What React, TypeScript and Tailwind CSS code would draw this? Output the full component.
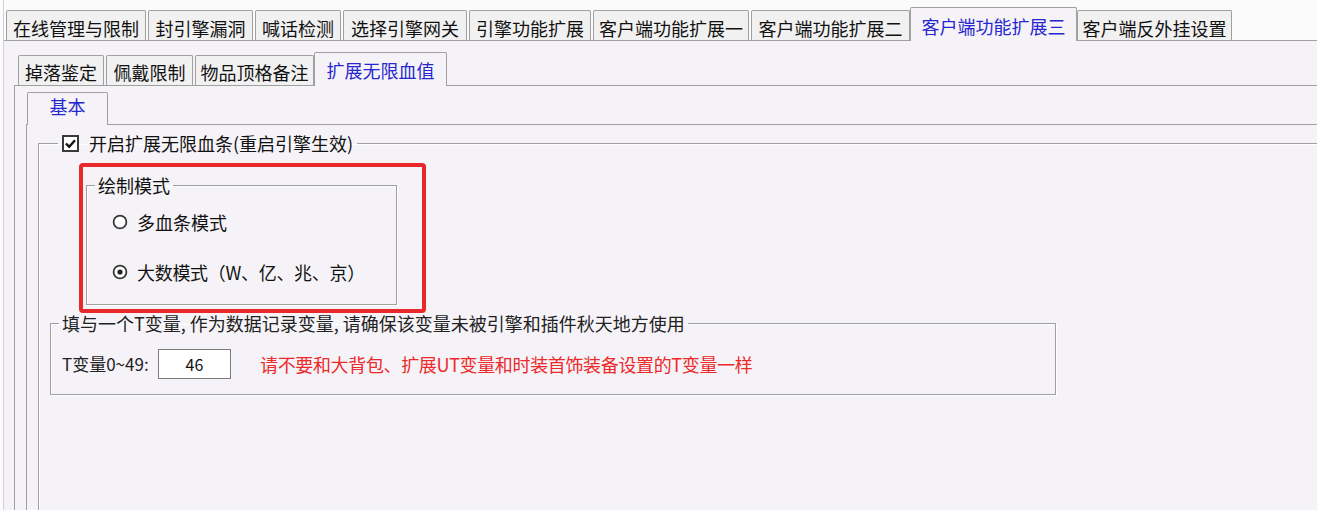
import React from "react";

type TabDef = { label: string; cls: string; active?: boolean };

const outerTabs: TabDef[] = [
  { label: "在线管理与限制", cls: "w-[140px]" },
  { label: "封引擎漏洞", cls: "w-[105px] ml-[2px]" },
  { label: "喊话检测", cls: "w-[86px] ml-[2px]" },
  { label: "选择引擎网关", cls: "w-[124px] ml-[2px]" },
  { label: "引擎功能扩展", cls: "w-[122px] ml-[2px]" },
  { label: "客户端功能扩展一", cls: "w-[156px] ml-[2px]" },
  { label: "客户端功能扩展二", cls: "w-[159px] ml-[2px]" },
  { label: "客户端功能扩展三", cls: "w-[167px]", active: true },
  { label: "客户端反外挂设置", cls: "w-[155px]" },
];

const innerTabs: TabDef[] = [
  { label: "掉落鉴定", cls: "w-[86px]" },
  { label: "佩戴限制", cls: "w-[87px] ml-[2px]" },
  { label: "物品顶格备注", cls: "w-[119px] ml-[2px]" },
  { label: "扩展无限血值", cls: "w-[133px]", active: true },
];

function OuterTab({ t }: { t: TabDef }) {
  if (t.active) {
    return (
      <div
        className={`${t.cls} shrink-0 h-[34px] -mb-px relative z-10 flex items-center justify-center pt-[3px] border border-b-0 border-[#a0a0a0] rounded-t-[2px] bg-[#f6f3f8] text-[#2727cf] text-[18px] leading-[18px]`}
      >
        {t.label}
      </div>
    );
  }
  return (
    <div
      className={`${t.cls} shrink-0 h-[30px] flex items-center justify-center pt-[5px] border border-b-0 border-[#a0a0a0] rounded-t-[2px] bg-[#f1f1f1] text-[#111] text-[18px] leading-[18px]`}
    >
      {t.label}
    </div>
  );
}

function InnerTab({ t }: { t: TabDef }) {
  if (t.active) {
    return (
      <div
        className={`${t.cls} shrink-0 h-[34px] -mb-px relative z-10 flex items-center justify-center pt-[1px] border border-b-0 border-[#a0a0a0] rounded-t-[2px] bg-[#f6f3f8] text-[#2727cf] text-[18px] leading-[18px]`}
      >
        {t.label}
      </div>
    );
  }
  return (
    <div
      className={`${t.cls} shrink-0 h-[30px] flex items-center justify-center pt-[3px] border border-b-0 border-[#a0a0a0] rounded-t-[2px] bg-[#f1f1f1] text-[#111] text-[18px] leading-[18px]`}
    >
      {t.label}
    </div>
  );
}

function CheckBox() {
  return (
    <svg width="17" height="17" viewBox="0 0 17 17" className="shrink-0">
      <rect x="1" y="1" width="15" height="15" fill="#ffffff" stroke="#3a3a3a" strokeWidth="2" />
      <path d="M4 8.5 L7.2 11.8 L13 5.2" fill="none" stroke="#111" strokeWidth="2.4" />
    </svg>
  );
}

function Radio({ checked }: { checked?: boolean }) {
  return (
    <svg width="16" height="16" viewBox="0 0 16 16" className="shrink-0">
      <circle cx="8" cy="8" r="6.4" fill="#ffffff" stroke="#3a3a3a" strokeWidth="1.8" />
      {checked && <circle cx="8" cy="8" r="2.6" fill="#222" />}
    </svg>
  );
}

export default function App() {
  return (
    <div className="relative w-[1317px] h-[510px] overflow-hidden bg-[#fcfcfc] font-['Noto_Sans_CJK_SC','Microsoft_YaHei',sans-serif] text-[#111]">
      <div className="ml-[3px] h-[510px] border-l border-[#d4d0d8] flex flex-col">
        {/* outer tab strip */}
        <div className="shrink-0 flex items-end h-[41px] pl-[2px] border-b border-[#a0a0a0] bg-[#fbfbfb]">
          {outerTabs.map((t) => (
            <OuterTab key={t.label} t={t} />
          ))}
        </div>

        {/* outer panel */}
        <div className="flex-1 min-h-0 bg-[#f6f3f8] pl-[10px] flex flex-col">
          <div className="shrink-0 flex items-end h-[45px] pl-[4px] border-b border-[#a0a0a0]">
            {innerTabs.map((t) => (
              <InnerTab key={t.label} t={t} />
            ))}
          </div>

          {/* second panel */}
          <div className="flex-1 min-h-0 border-l border-[#a0a0a0] pl-[11px] flex flex-col">
            <div className="shrink-0 flex items-end h-[39px] pl-[1px] border-b border-[#a0a0a0]">
              <div className="shrink-0 w-[81px] h-[33px] -mb-px relative z-10 flex items-center justify-center pb-[6px] border border-b-0 border-[#a0a0a0] rounded-t-[2px] bg-[#f6f3f8] text-[#2727cf] text-[18px] leading-[18px]">
                基本
              </div>
            </div>

            {/* third panel */}
            <div className="flex-1 min-h-0 border-l border-[#a0a0a0] pl-[11px]">
              <fieldset className="mt-[6px] min-h-[420px] border border-r-0 border-b-0 border-[#a0a0a0] shadow-[inset_1px_1px_0_#ffffff]">
                <legend className="ml-[19px] px-[4px] flex items-center h-[24px]">
                  <CheckBox />
                  <span className="ml-[10px] text-[18px] leading-[24px]">开启扩展无限血条(重启引擎生效)</span>
                </legend>

                <fieldset className="mt-[18px] ml-[47px] w-[311px] pb-[20px] border border-[#a0a0a0] shadow-[inset_1px_1px_0_#ffffff,1px_1px_0_#ffffff]">
                  <legend className="ml-[8px] px-[3px] h-[24px] text-[18px] leading-[24px]">绘制模式</legend>
                  <div className="mt-[13px] pl-[25px] flex items-center h-[24px]">
                    <Radio />
                    <span className="ml-[9px] text-[18px] leading-[24px]">多血条模式</span>
                  </div>
                  <div className="mt-[26px] pl-[25px] flex items-center h-[24px]">
                    <Radio checked />
                    <span className="ml-[9px] text-[18px] leading-[24px] tracking-[-0.3px]">大数模式（W、亿、兆、京）</span>
                  </div>
                </fieldset>

                <fieldset className="mt-[6px] ml-[11px] w-[1006px] pb-[15px] border border-[#a0a0a0] shadow-[inset_1px_1px_0_#ffffff,1px_1px_0_#ffffff]">
                  <legend className="ml-[8px] px-[3px] h-[24px] text-[18px] leading-[24px] text-[#222]">
                    填与一个T变量, 作为数据记录变量, 请确保该变量未被引擎和插件秋天地方使用
                  </legend>
                  <div className="mt-[14px] pl-[11px] flex items-center h-[30px]">
                    <span className="w-[96px] text-[17px] leading-[24px] text-[#222]">T变量0~49:</span>
                    <div className="w-[73px] h-[30px] bg-white border border-[#7c7c7c] flex items-center justify-center text-[16px] leading-[16px]">
                      46
                    </div>
                    <span className="ml-[29px] text-[18px] leading-[24px] tracking-[-0.35px] text-[#ec2a2a]">
                      请不要和大背包、扩展UT变量和时装首饰装备设置的T变量一样
                    </span>
                  </div>
                </fieldset>
              </fieldset>
            </div>
          </div>
        </div>
      </div>

      {/* red highlight annotation */}
      <div className="absolute left-[79px] top-[163px] w-[347px] h-[150px] border-[4px] border-[#e8282b] rounded-[4px] pointer-events-none" />
    </div>
  );
}
